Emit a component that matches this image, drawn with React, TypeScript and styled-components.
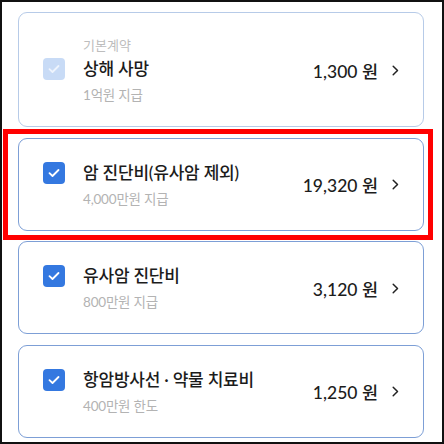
import styled, { createGlobalStyle } from "styled-components";

const GlobalStyle = createGlobalStyle`
  html, body {
    margin: 0;
    padding: 0;
    background: #fff;
  }
  body {
    font-family: Lato, "Noto Sans CJK KR", sans-serif;
  }
`;

const Frame = styled.div`
  position: relative;
  box-sizing: border-box;
  width: 444px;
  height: 444px;
  border: 2px solid #111;
  background: #fff;
  overflow: hidden;
  padding: 10px 18px 0 16px;
  display: flex;
  flex-direction: column;
  gap: 10.5px;
`;

const Card = styled.div<{ $muted?: boolean }>`
  flex-shrink: 0;
  display: flex;
  align-items: center;
  justify-content: space-between;
  border: 1px solid ${(p) => (p.$muted ? "#b7cbe8" : "#7d9fd6")};
  border-radius: 9px;
  padding: 22px 24px 21px 24px;
  background: #fff;
`;

const Info = styled.div`
  display: grid;
  grid-template-columns: 22px 1fr;
  column-gap: 18px;
  align-items: center;
`;

const Label = styled.div`
  grid-column: 2;
  font-size: 13px;
  line-height: 20px;
  margin-bottom: 2px;
  color: #bdbdbd;
`;

const Check = styled.span<{ $muted?: boolean }>`
  grid-column: 1;
  width: 22px;
  height: 22px;
  border-radius: 4px;
  background: ${(p) => (p.$muted ? "#c8dbf6" : "#3478e0")};
  display: flex;
  align-items: center;
  justify-content: center;
`;

const Title = styled.div`
  grid-column: 2;
  font-size: 17px;
  line-height: 24px;
  font-weight: 500;
  color: #1c1c1c;
  letter-spacing: -0.2px;
`;

const Sub = styled.div`
  grid-column: 2;
  font-size: 13.5px;
  line-height: 20px;
  margin-top: 4px;
  color: #b3b3b3;
  letter-spacing: -0.2px;
`;

const Price = styled.div`
  display: flex;
  align-items: center;
  gap: 14px;
  font-size: 17.5px;
  font-weight: 500;
  color: #1c1c1c;
  white-space: nowrap;
`;

const Highlight = styled.div`
  position: absolute;
  left: 1px;
  top: 127px;
  width: 430px;
  height: 111px;
  box-sizing: border-box;
  border: 5px solid #ff0000;
  pointer-events: none;
`;

const CheckIcon = ({ muted }: { muted?: boolean }) => (
  <svg width="12" height="10" viewBox="0 0 12 10">
    <path
      d="M1.5 5.2l3 2.8 6-6"
      fill="none"
      stroke={muted ? "#eef4fd" : "#fff"}
      strokeWidth="1.8"
      strokeLinecap="round"
      strokeLinejoin="round"
    />
  </svg>
);

const Chevron = () => (
  <svg width="7" height="11" viewBox="0 0 7 11">
    <path
      d="M1.2 1.2l4.3 4.3-4.3 4.3"
      fill="none"
      stroke="#222"
      strokeWidth="1.5"
      strokeLinecap="round"
      strokeLinejoin="round"
    />
  </svg>
);

const items = [
  { label: "기본계약", title: "상해 사망", sub: "1억원 지급", price: "1,300 원", muted: true },
  { title: "암 진단비(유사암 제외)", sub: "4,000만원 지급", price: "19,320 원" },
  { title: "유사암 진단비", sub: "800만원 지급", price: "3,120 원" },
  { title: "항암방사선 · 약물 치료비", sub: "400만원 한도", price: "1,250 원" },
];

export default function App() {
  return (
    <>
      <GlobalStyle />
      <Frame>
        {items.map((it) => (
          <Card key={it.title} $muted={it.muted}>
            <Info>
              {it.label ? <Label>{it.label}</Label> : null}
              <Check $muted={it.muted}>
                <CheckIcon muted={it.muted} />
              </Check>
              <Title>{it.title}</Title>
              <Sub>{it.sub}</Sub>
            </Info>
            <Price>
              {it.price}
              <Chevron />
            </Price>
          </Card>
        ))}
        <Highlight />
      </Frame>
    </>
  );
}
